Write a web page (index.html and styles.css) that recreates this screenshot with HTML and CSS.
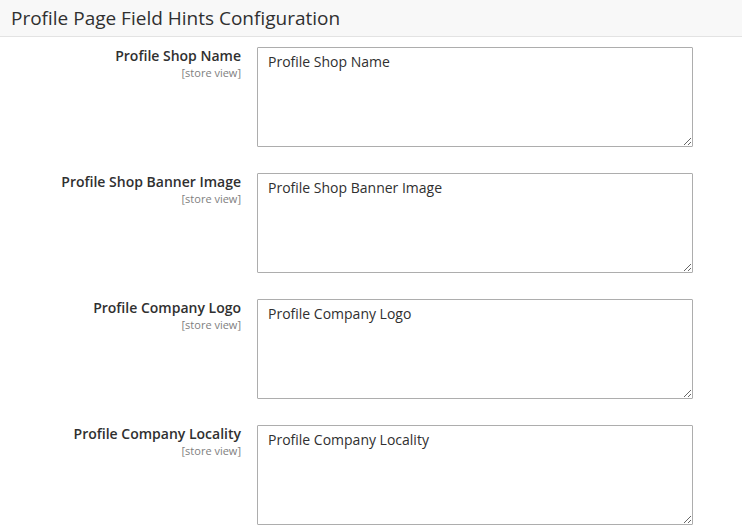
FILE: index.html
```html
<!DOCTYPE html>
<html lang="en">
<head>
<meta charset="UTF-8">
<title>Profile Page Field Hints Configuration</title>
<link rel="stylesheet" href="styles.css">
</head>
<body>

<div class="section">
    <div class="section-head">Profile Page Field Hints Configuration</div>

    <div class="fields">
        <div class="row">
            <div class="label">
                <span class="name">Profile Shop Name</span>
                <span class="scope">[store view]</span>
            </div>
            <textarea class="value">Profile Shop Name</textarea>
        </div>
        <div class="row">
            <div class="label">
                <span class="name">Profile Shop Banner Image</span>
                <span class="scope">[store view]</span>
            </div>
            <textarea class="value">Profile Shop Banner Image</textarea>
        </div>
        <div class="row">
            <div class="label">
                <span class="name">Profile Company Logo</span>
                <span class="scope">[store view]</span>
            </div>
            <textarea class="value">Profile Company Logo</textarea>
        </div>
        <div class="row">
            <div class="label">
                <span class="name">Profile Company Locality</span>
                <span class="scope">[store view]</span>
            </div>
            <textarea class="value">Profile Company Locality</textarea>
        </div>
    </div>
</div>

</body>
</html>
```

FILE: styles.css
```css
body {
    font-family: "Open Sans", Arial, sans-serif;
    color: #303030;
    background-color: #fff;
    margin: 0;
    padding: 0;
}
.section-head {
    height: 37px;
    box-sizing: border-box;
    padding: 5px 11px 0;
    background-color: #f8f8f8;
    border-bottom: 1px solid #e3e3e3;
    font-size: 19px;
    line-height: 26px;
    color: #303030;
}
.fields {
    padding-top: 10px;
}
.row {
    display: flex;
    gap: 16px;
    margin-bottom: 26px;
}
.label {
    width: 241px;
    display: flex;
    flex-direction: column;
    align-items: flex-end;
}
.name {
    font-size: 14px;
    font-weight: 600;
    line-height: 17px;
}
.scope {
    font-size: 11px;
    line-height: 17px;
    color: #808080;
}
.value {
    width: 436px;
    height: 100px;
    box-sizing: border-box;
    margin: 0;
    padding: 5px 10px;
    border: 1px solid #adadad;
    border-radius: 1px;
    font-family: "Open Sans", Arial, sans-serif;
    font-size: 14px;
    line-height: 18px;
    color: #303030;
    resize: vertical;
}
```
